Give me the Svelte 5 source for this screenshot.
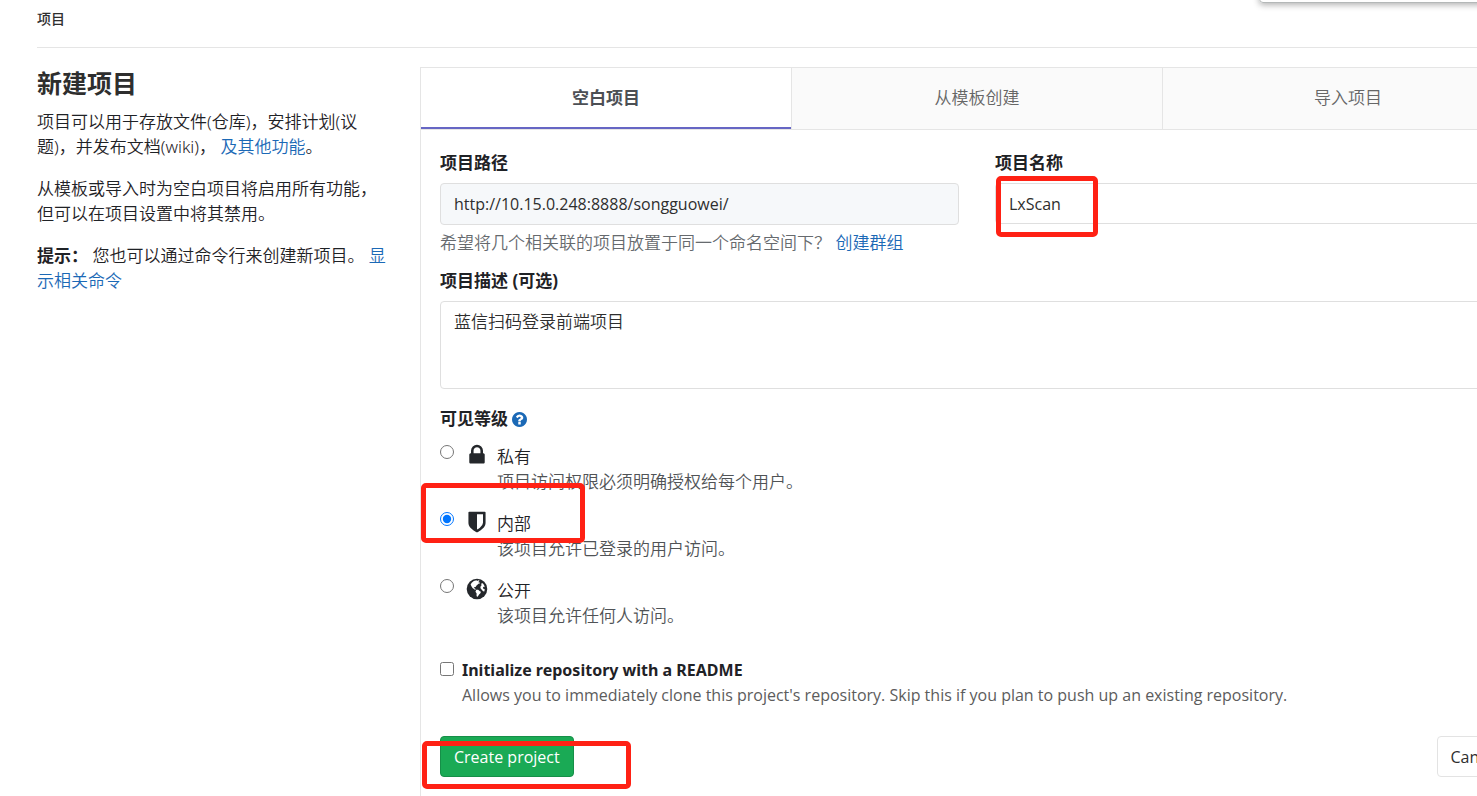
<script>
  const levels = [
    { id: 'private', icon: 'lock', title: '私有', text: '项目访问权限必须明确授权给每个用户。' },
    { id: 'internal', icon: 'shield', title: '内部', text: '该项目允许已登录的用户访问。' },
    { id: 'public', icon: 'globe', title: '公开', text: '该项目允许任何人访问。' }
  ];
  let visibility = $state('internal');
  let readme = $state(false);
  let name = $state('LxScan');
  let path = $state('http://10.15.0.248:8888/songguowei/');
  let description = $state('蓝信扫码登录前端项目');
</script>

<div class="page">
  <div class="popover"></div>
  <nav class="crumbs"><a href="#projects">项目</a></nav>

  <div class="columns">
    <aside>
      <h1>新建项目</h1>
      <p>项目可以用于存放文件(仓库)，安排计划(议题)，并发布文档(wiki)， <a href="#features">及其他功能</a>。</p>
      <p>从模板或导入时为空白项目将启用所有功能，但可以在项目设置中将其禁用。</p>
      <p><strong>提示：</strong> 您也可以通过命令行来创建新项目。 <a href="#command">显示相关命令</a></p>
    </aside>

    <main>
      <div class="tabs">
        <button class="tab active" type="button">空白项目</button>
        <button class="tab" type="button">从模板创建</button>
        <button class="tab" type="button">导入项目</button>
      </div>

      <form onsubmit={(e) => e.preventDefault()}>
        <div class="pair">
          <div class="field">
            <label for="path">项目路径</label>
            <input id="path" class="path" type="text" readonly value={path} />
          </div>
          <div class="field">
            <label for="name">项目名称</label>
            <div class="marked">
              <input id="name" type="text" bind:value={name} />
              <span class="mark mark-name"></span>
            </div>
          </div>
        </div>
        <p class="hint">希望将几个相关联的项目放置于同一个命名空间下？ <a href="#group">创建群组</a></p>

        <div class="field">
          <label for="desc">项目描述 (可选)</label>
          <textarea id="desc" bind:value={description}></textarea>
        </div>

        <fieldset>
          <legend>
            可见等级
            <a href="#help" aria-label="?">
              <svg class="help" viewBox="128 128 1536 1536"><path d="M1024 1376v-192q0-14-9-23t-23-9h-192q-14 0-23 9t-9 23v192q0 14 9 23t23 9h192q14 0 23-9t9-23zm256-672q0-88-55.5-163t-138.5-116-170-41q-243 0-371 213-15 24 8 42l132 100q7 6 19 6 16 0 25-12 53-68 86-92 34-24 86-24 48 0 85.5 26t37.5 59q0 38-20 61t-68 45q-63 28-115.5 86.5t-52.5 125.5v36q0 14 9 23t23 9h192q14 0 23-9t9-23q0-19 21.5-49.5t54.5-49.5q32-18 49-28.5t46-35 44.5-48 28-60.5 12.5-81zm384 192q0 209-103 385.5t-279.5 279.5-385.5 103-385.5-103-279.5-279.5-103-385.5 103-385.5 279.5-279.5 385.5-103 385.5 103 279.5 279.5 103 385.5z" /></svg>
            </a>
          </legend>
          {#each levels as level}
            <div class="level">
              <input id={level.id} type="radio" name="visibility" value={level.id} bind:group={visibility} />
              <label for={level.id}>
                <svg class="icon" viewBox="0 0 1792 1792">
                  {#if level.icon === 'lock'}
                    <path d="M640 768h512v-192q0-106-75-181t-181-75-181 75-75 181v192zm832 96v576q0 40-28 68t-68 28h-960q-40 0-68-28t-28-68v-576q0-40 28-68t68-28h32v-192q0-184 132-316t316-132 316 132 132 316v192h32q40 0 68 28t28 68z" />
                  {:else if level.icon === 'shield'}
                    <path d="M1344 960v-640h-448v1137q119-63 213-137 235-184 235-360zm192-768v768q0 86-33.5 170.5t-83 150-118 127.5-126.5 103-121 77.5-89.5 49.5-42.5 20q-12 6-26 6t-26-6q-16-7-42.5-20t-89.5-49.5-121-77.5-126.5-103-118-127.5-83-150-33.5-170.5v-768q0-26 19-45t45-19h1152q26 0 45 19t19 45z" />
                  {:else}
                    <circle cx="896" cy="896" r="768" />
                    <path class="land" d="M660 300L860 235L900 290L1010 250L1090 280L980 400L1080 400L1110 480L1000 500L930 580L860 640L790 740L690 760L660 830L760 860L800 960L740 960L640 880L560 830L480 690L420 560L500 420z" />
                    <path class="land" d="M840 960L980 960L1110 1060L1190 1100L1150 1220L1050 1300L980 1420L900 1500L860 1380L870 1230L780 1100z" />
                    <path class="land" d="M1210 480L1330 470L1430 620L1470 760L1380 720L1340 800L1390 900L1480 920L1440 1080L1350 1060L1250 950L1160 840L1150 720L1230 640z" />
                  {/if}
                </svg>
                <span class="title">{level.title}</span>
                <span class="text">{level.text}</span>
              </label>
              {#if level.id === 'internal'}<span class="mark mark-level"></span>{/if}
            </div>
          {/each}
        </fieldset>

        <div class="readme">
          <input id="readme" type="checkbox" bind:checked={readme} />
          <label for="readme">
            <strong>Initialize repository with a README</strong>
            <span class="text">Allows you to immediately clone this project's repository. Skip this if you plan to push up an existing repository.</span>
          </label>
        </div>

        <div class="actions">
          <button class="btn create" type="submit">Create project</button>
          <button class="btn" type="button">Cancel</button>
          <span class="mark mark-create"></span>
        </div>
      </form>
    </main>
  </div>
</div>

<style>
  :global(body) {
    margin: 0;
    background: #fff;
  }
  .page {
    position: relative;
    box-sizing: border-box;
    min-height: 100vh;
    overflow: hidden;
    display: flex;
    flex-direction: column;
    padding-left: 37px;
    color: #1f2226;
    font: 350 17px/25px "Noto Sans", "Noto Sans CJK SC", sans-serif;
  }
  input, textarea, button, .readme .text {
    font-family: "Open Sans", "Noto Sans CJK SC", sans-serif;
  }
  .popover {
    position: absolute;
    top: -18px;
    left: 1259px;
    right: -20px;
    height: 19px;
    border: 1px solid #b4b8b8;
    border-radius: 4px;
    box-shadow: 0 2px 6px rgba(0, 0, 0, 0.3);
  }
  a {
    color: #1b69b6;
    text-decoration: none;
  }
  .crumbs {
    height: 47px;
    border-bottom: 1px solid #e5e5e5;
    font-size: 14px;
    line-height: 37px;
  }
  .crumbs a {
    color: #2e2e2e;
    font-weight: 500;
  }
  .columns {
    flex: 1;
    display: flex;
    gap: 28px;
    margin: 19px -58px 0 0;
  }
  aside {
    flex: 0 0 355px;
  }
  h1 {
    margin: 0 0 10px;
    font-size: 25px;
    line-height: 32px;
    font-weight: 700;
    color: #2e2e2e;
  }
  p {
    margin: 0 0 17px;
  }
  strong {
    font-weight: 700;
  }
  main {
    flex: 1;
    min-width: 0;
    border: 1px solid #e5e5e5;
    border-bottom: 0;
  }
  .tabs {
    display: grid;
    grid-template-columns: repeat(3, 1fr);
    height: 61px;
    border-bottom: 1px solid #e5e5e5;
  }
  .tab {
    border: 0;
    border-right: 1px solid #e5e5e5;
    padding: 0 0 5px;
    background: #fafafa;
    color: #666;
    font-size: 17px;
    font-weight: 350;
  }
  .tab.active {
    background: #fff;
    color: #4c4f54;
    font-weight: 700;
    box-shadow: inset 0 -2px #6666c4;
  }
  form {
    padding: 20px 20px 19px 19px;
  }
  .pair {
    display: grid;
    grid-template-columns: 1fr 1fr;
    gap: 36px;
  }
  .field > label, legend {
    display: block;
    margin-bottom: 8px;
    padding: 0;
    font-weight: 700;
  }
  input[type="text"], textarea {
    display: block;
    box-sizing: border-box;
    width: 100%;
    height: 41px;
    margin: 0;
    padding: 7px 13px;
    border: 1px solid #dfdfdf;
    border-radius: 4px;
    background: #fff;
    color: #2e2e2e;
    font-size: 16px;
    font-weight: 400;
    line-height: 25px;
    outline: 0;
  }
  input.path {
    height: 42px;
    background: #f6f8fa;
  }
  textarea {
    height: 88px;
    font-size: 17px;
    font-weight: 350;
    resize: none;
  }
  .hint {
    margin: 5px 0 13px;
    color: #666a6e;
  }
  .marked, .level, .actions {
    position: relative;
  }
  .mark {
    position: absolute;
    box-sizing: border-box;
    border: 5px solid #ff2114;
    border-radius: 5px;
    pointer-events: none;
  }
  .mark-name {
    left: 1px;
    top: -7px;
    width: 102px;
    height: 61px;
  }
  .mark-level {
    left: -19px;
    top: -28px;
    width: 164px;
    height: 60px;
  }
  .mark-create {
    left: -18px;
    top: 5px;
    width: 209px;
    height: 48px;
  }
  fieldset {
    margin: 17px 0 0;
    padding: 0;
    border: 0;
  }
  legend {
    margin-bottom: 13px;
  }
  .help {
    width: 15px;
    height: 15px;
    vertical-align: -2px;
    fill: #1b69b6;
  }
  .level, .readme {
    display: flex;
    align-items: flex-start;
  }
  .level {
    margin-bottom: 17px;
  }
  .level input, .readme input {
    width: 14px;
    height: 14px;
    margin: 1px 13px 0 0;
  }
  .level label {
    display: grid;
    grid-template-columns: 30px auto;
  }
  .icon {
    width: 24px;
    height: 24px;
    margin: -1px 0 0 -2px;
    fill: #24272b;
  }
  .land {
    fill: #fff;
  }
  .text {
    grid-column: 2;
    color: #505356;
  }
  .readme {
    margin-top: 30px;
  }
  .readme input {
    margin: 4px 8px 0 0;
  }
  .level:last-child {
    margin-bottom: 0;
  }
  .readme label {
    display: flex;
    flex-direction: column;
    font-size: 16px;
  }
  .readme .text {
    color: #5c5c5c;
    font-weight: 400;
  }
  .actions {
    display: flex;
    justify-content: space-between;
    margin-top: 28px;
  }
  .btn {
    height: 41px;
    padding: 0 13px;
    border: 1px solid #e3e3e3;
    border-radius: 4px;
    background: #fff;
    color: #2e2e2e;
    font-size: 16px;
    font-weight: 400;
  }
  .create {
    border-color: #168f48;
    background: #1aaa55;
    color: #fff;
  }
</style>
